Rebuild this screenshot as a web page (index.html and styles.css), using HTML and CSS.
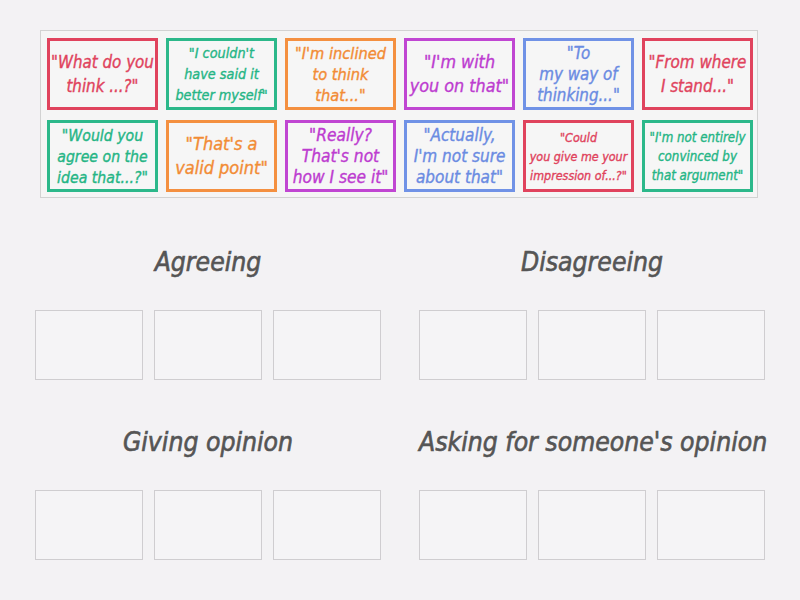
FILE: index.html
```html
<!DOCTYPE html>
<html>
<head>
<meta charset="utf-8">
<link rel="stylesheet" href="styles.css">
</head>
<body>
<div class="tray">
  <div class="card red c1">"What do you<br>think ...?"</div>
  <div class="card green c2">"I couldn't<br>have said it<br>better myself"</div>
  <div class="card orange c3">"I'm inclined<br>to think<br>that..."</div>
  <div class="card purple c4">"I'm with<br>you on that"</div>
  <div class="card blue c5">"To<br>my way of<br>thinking..."</div>
  <div class="card red c6">"From where<br>I stand..."</div>
  <div class="card green c7">"Would you<br>agree on the<br>idea that...?"</div>
  <div class="card orange c8">"That's a<br>valid point"</div>
  <div class="card purple c9">"Really?<br>That's not<br>how I see it"</div>
  <div class="card blue c10">"Actually,<br>I'm not sure<br>about that"</div>
  <div class="card red c11">"Could<br>you give me your<br>impression of...?"</div>
  <div class="card green c12">"I'm not entirely<br>convinced by<br>that argument"</div>
</div>
<div class="zones">
  <div class="zone">
    <div class="zone-title">Agreeing</div>
    <div class="slots"><div class="slot"></div><div class="slot"></div><div class="slot"></div></div>
  </div>
  <div class="zone">
    <div class="zone-title">Disagreeing</div>
    <div class="slots"><div class="slot"></div><div class="slot"></div><div class="slot"></div></div>
  </div>
  <div class="zone">
    <div class="zone-title">Giving opinion</div>
    <div class="slots"><div class="slot"></div><div class="slot"></div><div class="slot"></div></div>
  </div>
  <div class="zone">
    <div class="zone-title">Asking for someone's opinion</div>
    <div class="slots"><div class="slot"></div><div class="slot"></div><div class="slot"></div></div>
  </div>
</div>
</body>
</html>
```
FILE: styles.css
```css
html, body {
  margin: 0;
  padding: 0;
  background: #f3f2f4;
  font-family: "DejaVu Sans Condensed", "DejaVu Sans", sans-serif;
}
.tray {
  margin: 30px 0 0 40px;
  border: 1px solid #d2d2d2;
  background: #f5f5f5;
  display: grid;
  grid-template-columns: repeat(6, 111px);
  grid-template-rows: repeat(2, 72px);
  column-gap: 8px;
  row-gap: 10px;
  padding: 7px 0 0 6px;
  width: 710px;
  height: 159px;
}
.card {
  box-sizing: border-box;
  border: 3px solid;
  display: flex;
  align-items: center;
  justify-content: center;
  text-align: center;
  font-style: oblique;
  -webkit-text-stroke: 0.35px currentColor;
  background: #f6f6f6;
  white-space: nowrap;
  font-size: 16px;
  line-height: 21px;
}
.c1 { font-size: 16.8px; line-height: 24px; }
.c2 { font-size: 14.3px; }
.c3 { font-size: 16.3px; }
.c4 { font-size: 17.8px; line-height: 24px; }
.c5 { font-size: 16.8px; }
.c6 { font-size: 16.9px; line-height: 24px; }
.c7 { font-size: 15.7px; }
.c8 { font-size: 18px; line-height: 24px; }
.c9 { font-size: 17.2px; }
.c10 { font-size: 17px; }
.c11 { font-size: 12.4px; line-height: 19px; }
.c12 { font-size: 13.2px; line-height: 19px; }
.red { color: #e0435d; border-color: #e0435d; }
.green { color: #25b585; border-color: #2cb88a; }
.orange { color: #f28c35; border-color: #f49040; }
.purple { color: #bd3cd0; border-color: #c046d2; }
.blue { color: #6a8be2; border-color: #7092e6; }
.zones {
  margin: 49px 0 0 35px;
  display: grid;
  grid-template-columns: 346px 346px;
  column-gap: 38px;
  row-gap: 47px;
}
.zone-title {
  height: 30px;
  line-height: 30px;
  text-align: center;
  font-size: 26.3px;
  font-style: oblique;
  -webkit-text-stroke: 0.6px currentColor;
  color: #555;
  margin-bottom: 33px;
  white-space: nowrap;
}
.slots {
  display: flex;
  gap: 11px;
}
.slot {
  width: 108px;
  height: 70px;
  box-sizing: border-box;
  border: 1px solid #cfcdd0;
  background: #f5f4f6;
}
```
